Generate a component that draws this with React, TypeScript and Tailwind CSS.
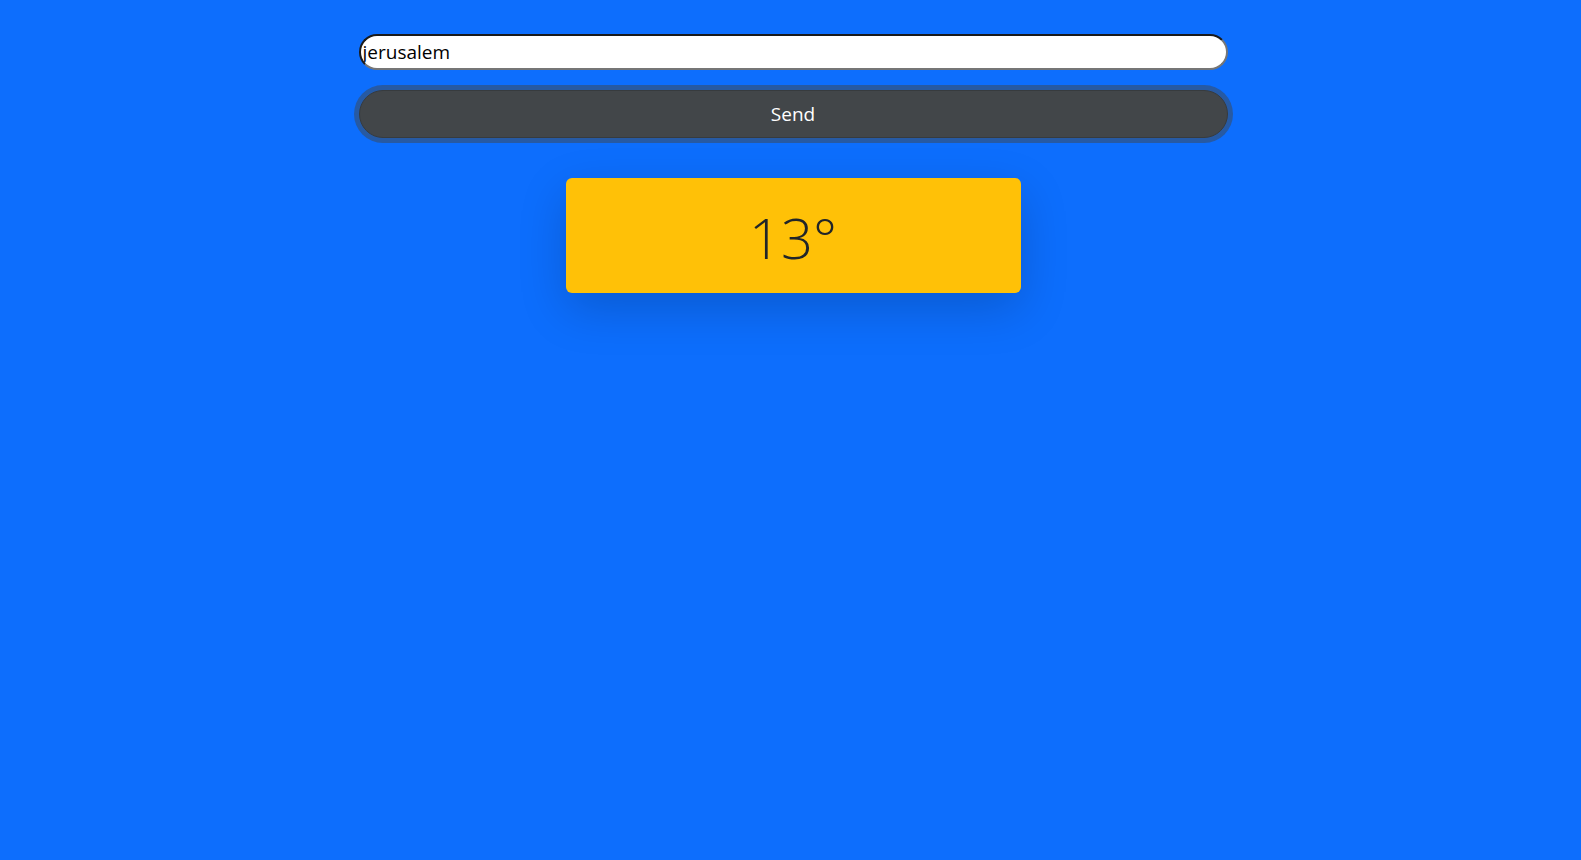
import React, { useState } from 'react';

function App() {
  const [city, setCity] = useState('jerusalem');
  const [temp] = useState(13);

  return (
    <div className="min-h-screen w-full bg-[#0d6efd] font-['Open_Sans',sans-serif]">
      <div className="flex flex-col items-center pt-[34px] pl-[5px]">
        {/* City Input */}
        <input
          type="text"
          value={city}
          onChange={(e) => setCity(e.target.value)}
          className="w-[869px] h-[36px] px-[2px] py-[1px] text-[19px] leading-[1.5] text-black bg-white rounded-full border-2 border-t-[#1a1a1a] border-l-[#1a1a1a] border-b-[#767676] border-r-[#767676] outline-none"
        />

        {/* Send Button */}
        <button
          type="button"
          className="mt-5 w-[869px] h-[48px] rounded-full bg-[#424649] border border-[#373b3e] text-white text-[19px] leading-[1.5] shadow-[0_0_0_5px_rgba(66,70,73,0.5)]"
        >
          Send
        </button>

        {/* Temperature Card */}
        <div className="mt-10 w-[455px] h-[115px] flex items-center justify-center pt-1 bg-[#ffc107] rounded-md shadow-[0_16px_48px_rgba(0,0,0,0.175)]">
          <span className="text-[56px] font-light leading-[1.2] text-[#212529]">{temp}°</span>
        </div>
      </div>
    </div>
  );
}

export default App;
